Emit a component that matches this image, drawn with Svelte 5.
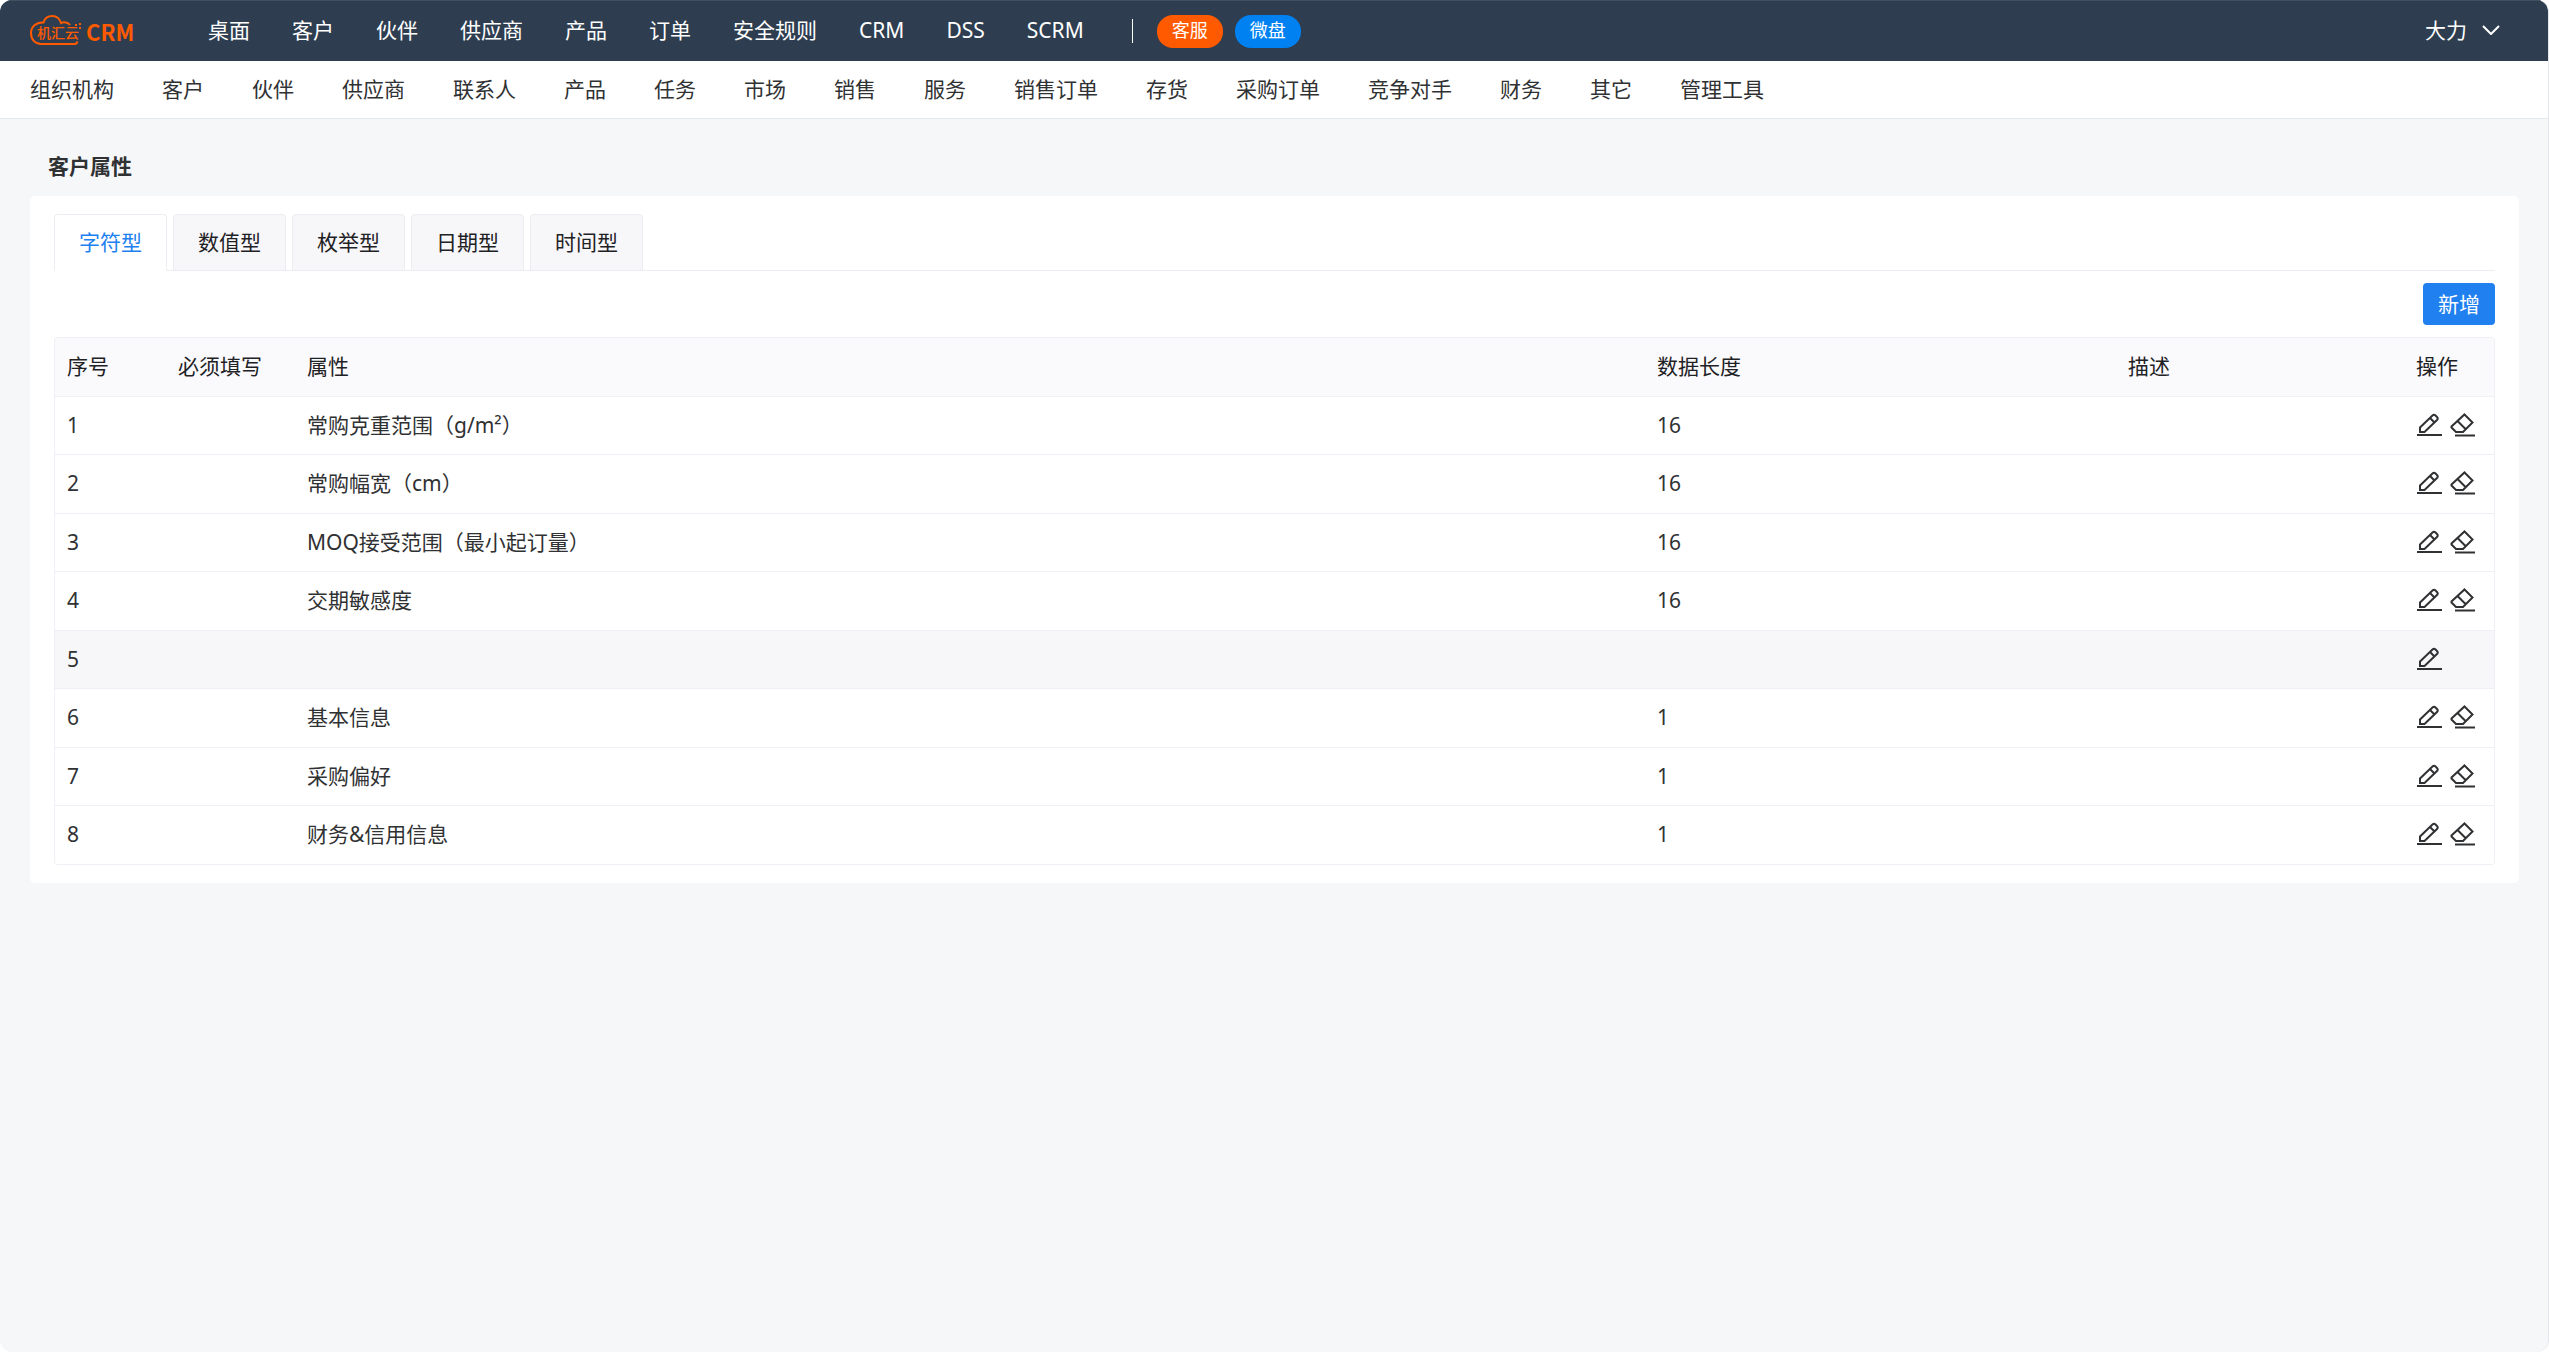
<script>
    let activeTab = $state('字符型');

    const mainNav = ['桌面', '客户', '伙伴', '供应商', '产品', '订单', '安全规则', 'CRM', 'DSS', 'SCRM'];
    const subNav = [
        '组织机构', '客户', '伙伴', '供应商', '联系人', '产品', '任务', '市场', '销售', '服务',
        '销售订单', '存货', '采购订单', '竞争对手', '财务', '其它', '管理工具'
    ];
    const tabs = ['字符型', '数值型', '枚举型', '日期型', '时间型'];
    const rows = [
        { id: 1, name: '常购克重范围（g/m²）', length: '16' },
        { id: 2, name: '常购幅宽（cm）', length: '16' },
        { id: 3, name: 'MOQ接受范围（最小起订量）', length: '16' },
        { id: 4, name: '交期敏感度', length: '16' },
        { id: 5, name: '', length: '' },
        { id: 6, name: '基本信息', length: '1' },
        { id: 7, name: '采购偏好', length: '1' },
        { id: 8, name: '财务&信用信息', length: '1' }
    ];
</script>

<div class="window">
    <header>
        <a class="logo" href="/">
            <svg width="54" height="34" viewBox="0 0 54 34">
                <path d="M40 11C38 8.500 34 7.500 31 9C29.500 4.500 26 2 22.500 2C18 2 14.500 4.500 13.500 8.500C6 8 1 13 1 19C1 25.500 5 30 11 30H44.500Q47 30 47.300 27.300" />
                <g class="dots">
                    <rect x="45" y="10" width="2" height="2" />
                    <rect x="49" y="9" width="2" height="2" />
                    <rect x="49" y="13" width="2" height="2" />
                </g>
                <text x="7" y="24">机汇云</text>
            </svg>
            <span>CRM</span>
        </a>
        <nav class="main-nav">
            {#each mainNav as item}
                <a href="#{item}">{item}</a>
            {/each}
        </nav>
        <span class="divider"></span>
        <button class="pill orange">客服</button>
        <button class="pill blue">微盘</button>
        <button class="user">
            大力
            <svg width="18" height="10" viewBox="0 0 18 10"><path d="M1 1l8 8 8-8" /></svg>
        </button>
    </header>

    <nav class="sub-nav">
        {#each subNav as item}
            <a href="#{item}">{item}</a>
        {/each}
    </nav>

    <main>
        <h1>客户属性</h1>
        <section class="card">
            <div class="tabs" role="tablist">
                {#each tabs as tab}
                    <button role="tab" aria-selected={tab === activeTab} class:active={tab === activeTab} onclick={() => (activeTab = tab)}>{tab}</button>
                {/each}
            </div>
            <div class="toolbar">
                <button class="add">新增</button>
            </div>
            <table>
                <colgroup>
                    <col class="c-id" />
                    <col class="c-required" />
                    <col />
                    <col class="c-length" />
                    <col class="c-desc" />
                    <col class="c-actions" />
                </colgroup>
                <thead>
                    <tr>
                        <th>序号</th>
                        <th>必须填写</th>
                        <th>属性</th>
                        <th>数据长度</th>
                        <th>描述</th>
                        <th>操作</th>
                    </tr>
                </thead>
                <tbody>
                    {#each rows as row (row.id)}
                        <tr class:empty={!row.name}>
                            <td>{row.id}</td>
                            <td></td>
                            <td>{row.name}</td>
                            <td>{row.length}</td>
                            <td></td>
                            <td>
                                <div class="actions">
                                    <button aria-label="编辑">
                                        <svg width="25" height="24" viewBox="0 0 25 24">
                                            <path d="M3 14.500L15.500 2.500Q17 1 18.500 2.500L20 4Q21.500 5.500 20 7L7.500 19H3zM13 5l4.500 4.500" />
                                            <path d="M0 22h25" />
                                        </svg>
                                    </button>
                                    {#if row.name}
                                        <button aria-label="删除">
                                            <svg width="25" height="24" viewBox="0 0 25 24">
                                                <path d="M14.500 1.500L22.500 9.500L13 19H6L1.500 14.500V13.500zM7.500 8l8 8" />
                                                <path d="M5 22.500h20" />
                                            </svg>
                                        </button>
                                    {/if}
                                </div>
                            </td>
                        </tr>
                    {/each}
                </tbody>
            </table>
        </section>
    </main>
</div>

<style>
    :global(body) {
        background: #fff;
    }
    .window {
        min-height: 100vh;
        box-sizing: border-box;
        border-right: 1px solid #e4e6ea;
        border-radius: 12px;
        overflow: hidden;
        background: #f5f7f9;
        color: #303133;
        font-family: 'Noto Sans', 'Noto Sans CJK SC', sans-serif;
        font-size: 21px;
        line-height: 30px;
    }
    a {
        color: inherit;
        text-decoration: none;
        white-space: nowrap;
    }
    button {
        font: inherit;
        color: inherit;
        border: none;
        background: none;
        padding: 0;
        cursor: pointer;
    }
    svg {
        display: block;
        fill: none;
        stroke: currentColor;
        stroke-width: 2;
    }
    header {
        display: flex;
        align-items: center;
        height: 61px;
        box-sizing: border-box;
        padding: 0 48px 0 30px;
        border-top: 1px solid #42505f;
        background: #2e3e50;
        color: #fff;
    }
    .logo {
        display: flex;
        align-items: center;
        gap: 2px;
        width: 178px;
        color: #ff5a00;
    }
    .logo text {
        fill: currentColor;
        stroke: none;
        font-family: 'Noto Sans CJK SC', sans-serif;
        font-size: 14px;
        font-weight: 500;
    }
    .logo span {
        font-family: 'Noto Sans CJK SC', sans-serif;
        font-size: 22px;
        font-weight: 700;
    }
    .dots rect {
        fill: currentColor;
        stroke: none;
    }
    .main-nav {
        display: flex;
        gap: 42px;
        padding-bottom: 2px;
    }
    .divider {
        width: 1px;
        height: 24px;
        margin: 0 24px 0 48px;
        background: #fff;
    }
    .pill {
        width: 66px;
        height: 33px;
        margin-right: 12px;
        padding-bottom: 2px;
        border-radius: 16px;
        color: #fff;
        font-size: 18px;
        line-height: 30px;
    }
    .orange {
        background: #ff5a00;
    }
    .blue {
        background: #0081f2;
    }
    .user {
        display: flex;
        align-items: center;
        gap: 15px;
        margin-left: auto;
        padding-bottom: 2px;
    }
    .sub-nav {
        display: flex;
        align-items: center;
        gap: 48px;
        height: 55px;
        padding: 0 30px 2px;
        border-bottom: 1px solid #e6e9ec;
        background: #fff;
    }
    main {
        padding: 32px 29px 33px 30px;
    }
    h1 {
        margin: 0 18px 15px;
        font-size: 21px;
        line-height: 30px;
        font-weight: 700;
    }
    .card {
        padding: 18px 24px;
        border-radius: 5px;
        background: #fff;
    }
    .tabs {
        display: flex;
        gap: 6px;
        border-bottom: 1px solid #ecedf2;
    }
    .tabs button {
        height: 57px;
        margin-bottom: -1px;
        padding: 0 24px 2px;
        border: 1px solid #ecedf2;
        border-radius: 4px 4px 0 0;
        background: #f7f7fa;
        color: #1f2225;
    }
    .tabs .active {
        border-bottom-color: #fff;
        background: #fff;
        color: #2080f0;
    }
    .toolbar {
        display: flex;
        justify-content: flex-end;
        padding: 12px 0;
    }
    .add {
        width: 72px;
        height: 42px;
        border-radius: 4px;
        background: #2080f0;
        color: #fff;
    }
    table {
        width: 100%;
        table-layout: fixed;
        border: 1px solid #efeff5;
        border-bottom: none;
        border-radius: 4px;
        border-spacing: 0;
        overflow: hidden;
    }
    .c-id {
        width: 111px;
    }
    .c-required {
        width: 129px;
    }
    .c-length {
        width: 471px;
    }
    .c-desc {
        width: 288px;
    }
    .c-actions {
        width: 90px;
    }
    th,
    td {
        height: 58px;
        box-sizing: border-box;
        padding: 0 12px 2px;
        border-bottom: 1px solid #efeff5;
        text-align: left;
        white-space: nowrap;
    }
    th {
        height: 59px;
        background: #fafafc;
        color: #1f2225;
        font-weight: 400;
    }
    tr:nth-child(even) td {
        height: 59px;
    }
    .empty td {
        background: #f7f7fa;
    }
    .actions {
        display: flex;
        gap: 8px;
        padding-left: 1px;
    }
</style>
